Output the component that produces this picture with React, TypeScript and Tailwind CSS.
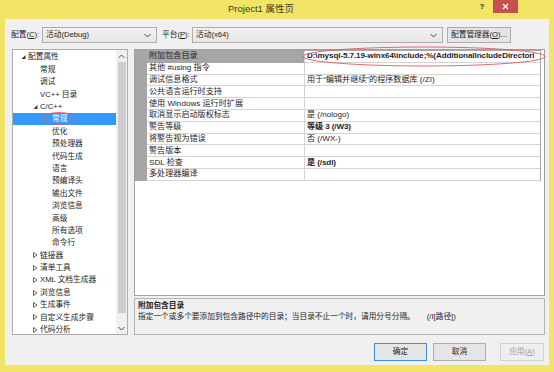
import React from 'react';

type TreeItem = { text: string; level: 0 | 1 | 2; arrow?: 'open' | 'closed'; selected?: boolean };

const treeItems: TreeItem[] = [
    { text: '配置属性', level: 0, arrow: 'open' },
    { text: '常规', level: 1 },
    { text: '调试', level: 1 },
    { text: 'VC++ 目录', level: 1 },
    { text: 'C/C++', level: 1, arrow: 'open' },
    { text: '常规', level: 2, selected: true },
    { text: '优化', level: 2 },
    { text: '预处理器', level: 2 },
    { text: '代码生成', level: 2 },
    { text: '语言', level: 2 },
    { text: '预编译头', level: 2 },
    { text: '输出文件', level: 2 },
    { text: '浏览信息', level: 2 },
    { text: '高级', level: 2 },
    { text: '所有选项', level: 2 },
    { text: '命令行', level: 2 },
    { text: '链接器', level: 1, arrow: 'closed' },
    { text: '清单工具', level: 1, arrow: 'closed' },
    { text: 'XML 文档生成器', level: 1, arrow: 'closed' },
    { text: '浏览信息', level: 1, arrow: 'closed' },
    { text: '生成事件', level: 1, arrow: 'closed' },
    { text: '自定义生成步骤', level: 1, arrow: 'closed' },
    { text: '代码分析', level: 1, arrow: 'closed' },
];

const indent = ['pl-[7px]', 'pl-[19px]', 'pl-[31px]'];

type Prop = { name: string; value?: string; bold?: boolean; active?: boolean };

// value of the first row is clipped by the column edge, as in the dialog
const props: Prop[] = [
    { name: '附加包含目录', value: 'D:\\mysql-5.7.19-winx64\\include;%(AdditionalIncludeDirectori', bold: true, active: true },
    { name: '其他 #using 指令' },
    { name: '调试信息格式', value: '用于“编辑并继续”的程序数据库 (/ZI)' },
    { name: '公共语言运行时支持' },
    { name: '使用 Windows 运行时扩展' },
    { name: '取消显示启动版权标志', value: '是 (/nologo)' },
    { name: '警告等级', value: '等级 3 (/W3)', bold: true },
    { name: '将警告视为错误', value: '否 (/WX-)' },
    { name: '警告版本' },
    { name: 'SDL 检查', value: '是 (/sdl)', bold: true },
    { name: '多处理器编译' },
];

function Chevron() {
    return (
        <svg width="7" height="5" viewBox="0 0 7 5" className="shrink-0">
            <path d="M0.5 1 L3.5 4 L6.5 1" fill="none" stroke="#444" strokeWidth="1" />
        </svg>
    );
}

function Arrow({ kind }: { kind?: 'open' | 'closed' }) {
    if (kind === 'open') {
        return (
            <svg width="8" height="8" viewBox="0 0 8 8">
                <path d="M5.5 2 L5.5 6 L1.5 6 Z" fill="#333" />
            </svg>
        );
    }
    if (kind === 'closed') {
        return (
            <svg width="8" height="8" viewBox="0 0 8 8">
                <path d="M1.5 1.5 L5 4 L1.5 6.5 Z" fill="none" stroke="#555" strokeWidth="0.9" />
            </svg>
        );
    }
    return null;
}

function Combo({ text, width }: { text: string; width: string }) {
    return (
        <div className={`${width} h-[16px] flex items-center justify-between pl-[3px] pr-[5px] border border-[#acacac] bg-gradient-to-b from-[#f2f2f2] to-[#e6e6e6]`}>
            <span>{text}</span>
            <Chevron />
        </div>
    );
}

export default function App() {
    return (
        <div className="relative w-[554px] h-[372px] bg-[#f2e565] flex flex-col text-[7.7px] text-[#1e1e1e] font-['Liberation_Sans','Noto_Sans_CJK_SC',sans-serif] overflow-hidden">
            {/* caption */}
            <div className="h-[19px] flex items-center justify-center pr-[32px] text-[9.5px] text-[#3b3a2a]">
                Project1 属性页
            </div>
            <div className="absolute top-0 right-[36px] flex items-start">
                <div className="w-[22px] h-[13px] flex items-center justify-center text-[8px] font-bold text-[#333]">?</div>
                <div className="w-[25px] h-[13px] bg-[#c7504f] flex items-center justify-center">
                    <svg width="7" height="7" viewBox="0 0 7 7">
                        <path d="M1 1 L6 6 M6 1 L1 6" stroke="#fff" strokeWidth="1.4" />
                    </svg>
                </div>
            </div>

            {/* client area */}
            <div className="mx-[5px] mb-[7px] flex-1 bg-[#f0f0f0] flex flex-col">
                <div className="mt-[8px] h-[16px] flex items-center pl-[6px]">
                    <span className="w-[31px]">配置(<u>C</u>):</span>
                    <Combo text="活动(Debug)" width="w-[115px]" />
                    <span className="ml-[5px] w-[30px]">平台(<u>P</u>):</span>
                    <Combo text="活动(x64)" width="w-[251px]" />
                    <div className="ml-[4px] w-[64px] h-[16px] flex items-center justify-center border border-[#acacac] bg-[#e5e5e5]">
                        配置管理器(<u>O</u>)...
                    </div>
                </div>

                <div className="mt-[6px] h-[286px] flex pl-[7px] pr-[4px] gap-[6px]">
                    {/* tree */}
                    <div className="w-[116px] shrink-0 h-full border border-[#acacac] bg-white flex">
                        <div className="flex-1 pt-[1px] overflow-hidden">
                            {treeItems.map((item, i) => (
                                <div
                                    key={i}
                                    className={`h-[12.4px] flex items-center whitespace-nowrap ${indent[item.level]} ${item.selected ? 'bg-[#3399ff] text-white' : ''}`}
                                >
                                    <span className="w-[8px] flex items-center">
                                        <Arrow kind={item.arrow} />
                                    </span>
                                    <span>{item.text}</span>
                                </div>
                            ))}
                        </div>
                        <div className="w-[11px] bg-[#f0f0f0] flex flex-col items-center">
                            <div className="h-[12px] flex items-center justify-center">
                                <svg width="7" height="5" viewBox="0 0 7 5">
                                    <path d="M0.5 4 L3.5 1 L6.5 4" fill="none" stroke="#555" strokeWidth="1" />
                                </svg>
                            </div>
                            <div className="w-[8px] h-[251px] bg-[#cdcdcd]" />
                            <div className="flex-1 flex items-end pb-[3px]">
                                <Chevron />
                            </div>
                        </div>
                    </div>

                    {/* property grid + description */}
                    <div className="flex-1 min-w-0 flex flex-col gap-[2px] text-[8.1px]">
                        <div className="h-[247px] border border-[#a0a0a0] bg-white pr-[3px]">
                            <div className="bg-[#a6a6a6] pt-[1px] pl-[12px] pr-[1px]">
                                {props.map((p, i) => (
                                    <div key={i} className="h-[11.8px] flex">
                                        <div className={`w-[158px] shrink-0 pl-[2px] flex items-center whitespace-nowrap border-b border-r border-[#d4d4d4] ${p.active ? 'bg-[#a6a6a6] border-b-[#a6a6a6]' : 'bg-white'}`}>
                                            {p.name}
                                        </div>
                                        <div className={`flex-1 min-w-0 pl-[2px] flex items-center whitespace-nowrap overflow-hidden bg-white border-b border-[#d4d4d4] ${p.bold ? 'font-bold tracking-[-0.1px]' : ''}`}>
                                            {p.value}
                                        </div>
                                    </div>
                                ))}
                            </div>
                        </div>
                        <div className="h-[37px] border border-[#b4b4b4] bg-[#f0f0f0] px-[3px] pt-[1px] leading-[11px] text-[7.7px] overflow-hidden">
                            <div className="font-bold">附加包含目录</div>
                            <div className="whitespace-nowrap">
                                指定一个或多个要添加到包含路径中的目录；当目录不止一个时，请用分号分隔。
                                <span className="ml-[12px]">(/I[路径])</span>
                            </div>
                        </div>
                    </div>
                </div>

                <div className="mt-[8px] h-[18px] flex justify-end pr-[5px]">
                    <div className="w-[53px] h-full flex items-center justify-center border border-[#3c8fe0] bg-[#e5e5e5]">确定</div>
                    <div className="ml-[6px] w-[53px] h-full flex items-center justify-center border border-[#acacac] bg-[#e5e5e5]">取消</div>
                    <div className="ml-[14px] w-[44px] h-full flex items-center justify-center border border-[#d0d0d0] bg-[#efefef] text-[#a0a0a0]">应用(<u>A</u>)</div>
                </div>
            </div>

            {/* red annotation ellipses */}
            <svg className="absolute left-0 top-0 pointer-events-none" width="554" height="372">
                <ellipse cx="424" cy="56.5" rx="121" ry="9.5" fill="none" stroke="#e05a5a" strokeWidth="0.9" />
                <ellipse cx="59" cy="118.5" rx="16" ry="6" fill="none" stroke="#e05a5a" strokeWidth="0.9" />
            </svg>
        </div>
    );
}
